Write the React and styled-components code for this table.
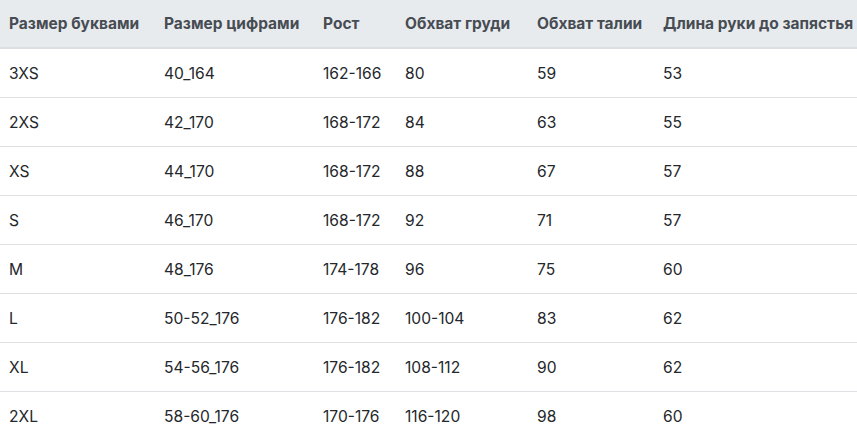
import React from "react";
import styled, { createGlobalStyle } from "styled-components";

const Global = createGlobalStyle`
  html, body { margin: 0; padding: 0; background: #fff; overflow: hidden; }
  body { font-family: Inter, "Noto Sans", sans-serif; }
`;

const Table = styled.table`
  border-collapse: collapse;
  table-layout: fixed;
  width: 880px;
`;

const HeadCell = styled.th`
  background: #e8ebee;
  color: #474c53;
  font-size: 15.5px;
  font-weight: 700;
  text-align: left;
  white-space: nowrap;
  height: 48px;
  padding: 0 0 0 9px;
  border-bottom: 2px solid #dcdee2;
  box-sizing: border-box;
`;

const Row = styled.tr`
  border-bottom: 1px solid #dfe0e4;
`;

const Cell = styled.td`
  color: #24272b;
  font-size: 15.6px;
  font-weight: 400;
  height: 49px;
  padding: 1px 0 0 9px;
  white-space: nowrap;
  box-sizing: border-box;
`;

const widths = [155, 159, 82, 132, 126, 226];
const heads = [
  "Размер буквами",
  "Размер цифрами",
  "Рост",
  "Обхват груди",
  "Обхват талии",
  "Длина руки до запястья",
];
const rows = [
  ["3XS", "40_164", "162-166", "80", "59", "53"],
  ["2XS", "42_170", "168-172", "84", "63", "55"],
  ["XS", "44_170", "168-172", "88", "67", "57"],
  ["S", "46_170", "168-172", "92", "71", "57"],
  ["M", "48_176", "174-178", "96", "75", "60"],
  ["L", "50-52_176", "176-182", "100-104", "83", "62"],
  ["XL", "54-56_176", "176-182", "108-112", "90", "62"],
  ["2XL", "58-60_176", "170-176", "116-120", "98", "60"],
];

export default function App() {
  return (
    <>
      <Global />
      <Table>
        <colgroup>
          {widths.map((w, i) => (
            <col key={i} style={{ width: w }} />
          ))}
        </colgroup>
        <thead>
          <tr>
            {heads.map((h) => (
              <HeadCell key={h}>{h}</HeadCell>
            ))}
          </tr>
        </thead>
        <tbody>
          {rows.map((r) => (
            <Row key={r[0]}>
              {r.map((c, i) => (
                <Cell key={i}>{c}</Cell>
              ))}
            </Row>
          ))}
        </tbody>
      </Table>
    </>
  );
}
